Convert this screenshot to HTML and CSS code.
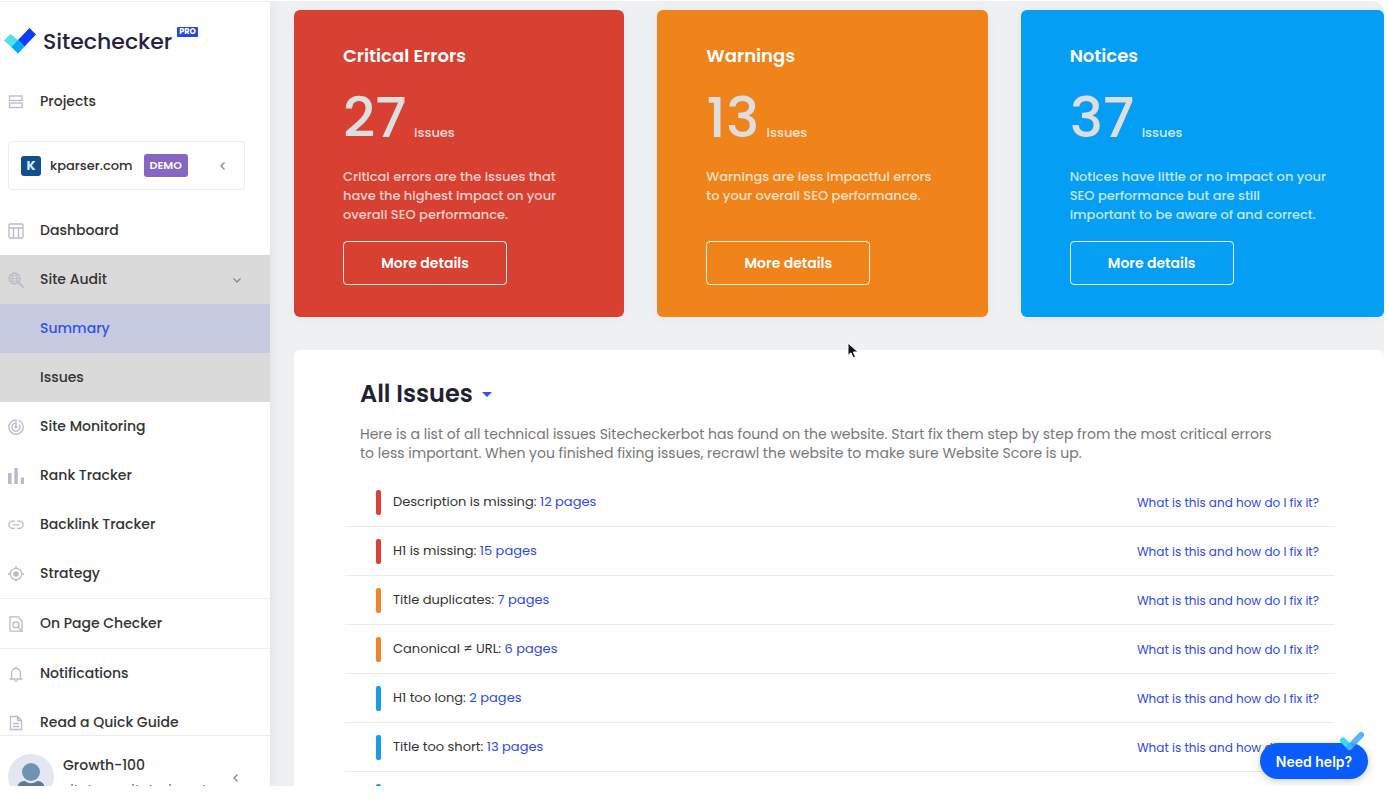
FILE: index.html
```html
<!DOCTYPE html>
<html lang="en">
<head>
  <meta charset="UTF-8">
  <meta name="viewport" content="width=device-width, initial-scale=1">
  <title>Sitechecker - Site Audit</title>
  <link rel="stylesheet" href="styles.css">
</head>
<body>
  <div class="app">
    <aside class="sidebar">
      <a class="logo" href="#">
        <svg class="logo-mark" width="32" height="26" viewBox="0 0 32 26" aria-hidden="true">
          <path d="M0 12.500 6.500 6 14 12 20.500 18.500 14 25.500Z" fill="#55dfe8"/>
          <path d="M25.500 0 32 6.500 20.500 18.500 14 12Z" fill="#0b3dfa"/>
          <path d="M14 12 20.500 18.500 14 25.500 7.500 19Z" fill="#04a9fb"/>
        </svg>
        <span class="logo-text">Sitechecker</span>
        <span class="pro">PRO</span>
      </a>

      <nav class="menu">
        <a class="item" href="#">
          <svg class="icon" viewBox="0 0 16 16"><rect x="1.500" y="2" width="12.500" height="4.500"/><rect x="1.500" y="9" width="12.500" height="4.500"/></svg>
          Projects
        </a>
        <button class="project" type="button">
          <span class="favicon">K</span>
          <span class="domain">kparser.com</span>
          <span class="demo">DEMO</span>
          <svg class="arrow" viewBox="0 0 12 12"><path d="M7.500 2.500 4 6l3.500 3.500"/></svg>
        </button>
        <a class="item" href="#">
          <svg class="icon" viewBox="0 0 16 16"><rect x="1" y="1" width="14" height="14" rx="1"/><path d="M1 5h14M5.500 5v10M10.500 5v10"/></svg>
          Dashboard
        </a>
        <a class="item open" href="#">
          <svg class="icon" viewBox="0 0 16 16"><circle cx="6.500" cy="6.500" r="5.500"/><ellipse cx="6.500" cy="6.500" rx="2.500" ry="5.500" stroke-width="1"/><path d="M1 6.500h11M2 3.800h9M2 9.200h9" stroke-width="1"/><path d="m10.500 10.500 5 5" stroke-width="2"/></svg>
          Site Audit
          <svg class="arrow" viewBox="0 0 12 12"><path d="M2.500 4.500 6 8l3.500-3.500"/></svg>
        </a>
        <a class="item sub active" href="#">Summary</a>
        <a class="item sub" href="#">Issues</a>
        <a class="item" href="#">
          <svg class="icon" viewBox="0 0 16 16"><path d="M8 8V.8a7.200 7.200 0 1 0 5.500 2.500M8 4.200a4 4 0 1 0 3 1.400"/><path d="M10.500 1.300a7.200 7.200 0 0 1 3 2"/><circle class="dot" cx="8" cy="8" r="1.500"/></svg>
          Site Monitoring
        </a>
        <a class="item" href="#">
          <svg class="icon solid" viewBox="0 0 16 16"><path d="M0 5h3.500v11H0zM6.300 0h3.500v16H6.300zM12.800 9.500H16V16h-3.200z"/></svg>
          Rank Tracker
        </a>
        <a class="item" href="#">
          <svg class="icon" viewBox="0 0 16 16"><path d="M7 4.200H4.500a3.600 3.600 0 0 0 0 7.200H7M9 4.200h2.500a3.600 3.600 0 0 1 0 7.200H9M5 7.800h6"/></svg>
          Backlink Tracker
        </a>
        <a class="item" href="#">
          <svg class="icon" viewBox="0 0 16 16"><circle cx="8" cy="8" r="5.700"/><circle class="dot" cx="8" cy="8" r="2.800"/><path d="M8 0v2.300M8 13.700V16M0 8h2.300M13.700 8H16"/></svg>
          Strategy
        </a>
        <a class="item line" href="#">
          <svg class="icon" viewBox="0 0 16 16"><path d="M2 .8h8L14 5v10.200H2z"/><circle cx="8" cy="8.800" r="3"/><path d="m10 11 3.800 4"/></svg>
          On Page Checker
        </a>
        <a class="item line" href="#">
          <svg class="icon" viewBox="0 0 16 16"><path d="M1.500 13h13M3.500 13V7a4.500 4.500 0 0 1 9 0v6M8 .5v2M6.700 14.500a1.400 1.400 0 0 0 2.600 0"/></svg>
          Notifications
        </a>
        <a class="item" href="#">
          <svg class="icon" viewBox="0 0 16 16"><path d="M2.500 1.500h7l4 4v9h-11zM9.500 1.500v4h4M5 8.500h6M5 11.500h6"/></svg>
          Read a Quick Guide
        </a>
      </nav>

      <div class="user">
        <svg class="avatar" width="46" height="46" viewBox="0 0 46 46" aria-hidden="true">
          <circle cx="23" cy="23" r="23" fill="#e3e7f2"/>
          <circle cx="23" cy="18" r="9" fill="#7094ad"/>
          <path d="M9 36c0-6 3-9 8-9 4 3 8 3 12 0 5 0 8 3 8 9z" fill="#5f7898"/>
        </svg>
        <div class="user-info">
          <span>Growth-100</span>
          <span class="email">sitetomysitetrains@t...</span>
        </div>
        <svg class="arrow" viewBox="0 0 12 12"><path d="M7.500 2.500 4 6l3.500 3.500"/></svg>
      </div>
    </aside>

    <main class="content">
      <div class="cards">
        <section class="card red">
          <h2>Critical Errors</h2>
          <p class="count"><strong>27</strong> issues</p>
          <p class="text">Critical errors are the issues that<br>have the highest impact on your<br>overall SEO performance.</p>
          <button type="button">More details</button>
        </section>
        <section class="card orange">
          <h2>Warnings</h2>
          <p class="count"><strong>13</strong> issues</p>
          <p class="text">Warnings are less impactful errors<br>to your overall SEO performance.</p>
          <button type="button">More details</button>
        </section>
        <section class="card blue">
          <h2>Notices</h2>
          <p class="count"><strong>37</strong> issues</p>
          <p class="text">Notices have little or no impact on your<br>SEO performance but are still<br>important to be aware of and correct.</p>
          <button type="button">More details</button>
        </section>
      </div>

      <section class="issues">
        <button class="filter" type="button">All Issues <span class="caret"></span></button>
        <p class="intro">Here is a list of all technical issues Sitecheckerbot has found on the website. Start fix them step by step from the most critical errors<br>to less important. When you finished fixing issues, recrawl the website to make sure Website Score is up.</p>
        <ul class="list">
          <li class="critical"><span>Description is missing: <a href="#">12 pages</a></span><a class="help" href="#">What is this and how do I fix it?</a></li>
          <li class="critical"><span>H1 is missing: <a href="#">15 pages</a></span><a class="help" href="#">What is this and how do I fix it?</a></li>
          <li class="warning"><span>Title duplicates: <a href="#">7 pages</a></span><a class="help" href="#">What is this and how do I fix it?</a></li>
          <li class="warning"><span>Canonical ≠ URL: <a href="#">6 pages</a></span><a class="help" href="#">What is this and how do I fix it?</a></li>
          <li class="notice"><span>H1 too long: <a href="#">2 pages</a></span><a class="help" href="#">What is this and how do I fix it?</a></li>
          <li class="notice"><span>Title too short: <a href="#">13 pages</a></span><a class="help" href="#">What is this and how do I fix it?</a></li>
          <li class="notice"></li>
        </ul>
      </section>
    </main>

    <button class="chat" type="button">
      Need help?
      <svg class="chat-mark" width="26" height="20" viewBox="0 0 26 20" aria-hidden="true">
        <path d="M4 9.500 10.500 16" stroke="#35dcf8"/>
        <path d="M10.500 16 22 4" stroke="#45acfb" stroke-opacity=".9"/>
      </svg>
    </button>
    <svg class="cursor" width="12" height="18" viewBox="0 0 12 18" aria-hidden="true">
      <path d="M1 1v12.500l3-2.700 2.200 5 2.300-1-2.200-4.800H11z" fill="#111" stroke="#fff"/>
    </svg>
  </div>
</body>
</html>
```
FILE: styles.css
```css
* {
  box-sizing: border-box;
}
body {
  margin: 0;
  padding: 1px 4px 13px 0;
  height: 100vh;
  background: #fff;
  font-family: Poppins, Inter, sans-serif;
  font-size: 14px;
  color: #333;
}
a {
  color: #2f49e8;
  text-decoration: none;
}
button {
  font-family: inherit;
  cursor: pointer;
}
h2, p, ul {
  margin: 0;
  padding: 0;
}
.app {
  position: relative;
  display: flex;
  height: 100%;
  overflow: hidden;
  background: #eef0f2;
  border-radius: 0 12px 0 0;
}

/* sidebar */
.sidebar {
  display: flex;
  flex-direction: column;
  flex: none;
  width: 270px;
  background: #fff;
  border-top: 1px solid #f0f0f2;
  box-shadow: 0 0 12px rgba(0, 0, 0, 0.08);
}
.logo {
  display: flex;
  flex: none;
  align-items: center;
  height: 75px;
  padding: 3px 0 0 4px;
  color: #25233f;
}
.logo-text {
  margin-left: 7px;
  font-size: 22px;
  font-weight: 500;
}
.pro {
  align-self: flex-start;
  margin: 22px 0 0 5px;
  padding: 0 2px;
  border-radius: 1px;
  background: #2546e5;
  color: #fff;
  font-size: 8px;
  font-weight: 700;
  line-height: 10px;
}
.menu {
  flex: 1;
  overflow: hidden;
}
.item {
  display: flex;
  align-items: center;
  height: 49px;
  padding: 0 27px 0 8px;
  color: #333;
  font-weight: 500;
}
.icon {
  flex: none;
  width: 16px;
  height: 16px;
  margin-right: 16px;
  fill: none;
  stroke: #b8bcc8;
  stroke-width: 1.3;
}
.icon .dot,
.icon.solid {
  fill: #b8bcc8;
  stroke: none;
}
.arrow {
  width: 12px;
  height: 12px;
  margin-left: auto;
  fill: none;
  stroke: #888;
  stroke-width: 1.3;
}
.open,
.sub {
  background: #dadada;
}
.sub {
  padding-left: 40px;
}
.active {
  background: #c4cae0;
  color: #3450ee;
}
.line {
  height: 50px;
  border-top: 1px solid #f0f0f2;
}
.project {
  display: flex;
  align-items: center;
  width: 237px;
  height: 49px;
  margin: 15px 8px 16px;
  padding: 0 15px 0 12px;
  border: 1px solid #ececf1;
  border-radius: 4px;
  background: #fff;
  color: #333;
  font-size: 13px;
  font-weight: 500;
}
.favicon {
  width: 20px;
  margin-right: 9px;
  border-radius: 3px;
  background: #114f8f;
  color: #dce9f6;
  font-weight: 700;
  line-height: 20px;
}
.demo {
  margin-left: 11px;
  padding: 0 6px;
  border-radius: 3px;
  background: #8665c3;
  color: #fff;
  font-size: 11px;
  font-weight: 600;
  line-height: 23px;
}
.user {
  display: flex;
  flex: none;
  height: 51px;
  padding: 18px 28px 0 8px;
  border-top: 1px solid #ececee;
  overflow: hidden;
  font-weight: 500;
}
.avatar {
  flex: none;
}
.user-info {
  display: flex;
  flex-direction: column;
  gap: 2px;
  margin-left: 9px;
  line-height: 23px;
}
.user .arrow {
  margin-top: 18px;
}
.email {
  color: #666;
  font-size: 14px;
  font-weight: 400;
}

/* cards */
.content {
  flex: 1;
  min-width: 0;
  padding: 9px 0 0 24px;
}
.cards {
  display: grid;
  grid-template-columns: 10fr 10fr 11fr;
  gap: 33px;
}
.card {
  display: flex;
  flex-direction: column;
  align-items: flex-start;
  height: 307px;
  padding: 31px 0 32px 49px;
  border-radius: 6px;
  box-shadow: 0 2px 12px rgba(0, 0, 0, 0.04);
  color: #fff;
}
.red {
  background: #d84132;
}
.orange {
  background: #f0831a;
}
.blue {
  background: #049ff5;
}
.card h2 {
  font-size: 18px;
  font-weight: 600;
  line-height: 30px;
}
.count {
  margin-top: 17px;
  color: rgba(255, 255, 255, 0.8);
  font-size: 13px;
  font-weight: 500;
  line-height: 60px;
}
.count strong {
  margin-right: 4px;
  color: #dedede;
  font-size: 56px;
  font-weight: 500;
}
.text {
  margin-top: 4px;
  color: rgba(255, 255, 255, 0.75);
  font-size: 13px;
  font-weight: 500;
  line-height: 19px;
  white-space: nowrap;
}
.card button {
  width: 164px;
  height: 44px;
  margin-top: auto;
  border: 1px solid rgba(255, 255, 255, 0.9);
  border-radius: 4px;
  background: none;
  color: #fff;
  font-size: 14px;
  font-weight: 600;
}

/* issues */
.issues {
  margin-top: 33px;
  padding: 26px 50px 0 51px;
  border-radius: 6px 6px 0 0;
  background: #fff;
}
.filter {
  display: flex;
  align-items: center;
  margin-left: 15px;
  padding: 0;
  border: 0;
  background: none;
  color: #1f2230;
  font-size: 24px;
  font-weight: 600;
  line-height: 36px;
}
.caret {
  margin-left: 9px;
  border: 5px solid transparent;
  border-top-color: #3450ee;
  border-bottom: 0;
}
.intro {
  margin: 13px 0 15px 15px;
  color: #777;
  font-size: 14px;
  line-height: 19px;
  white-space: nowrap;
}
.list {
  list-style: none;
}
.list li {
  display: flex;
  align-items: center;
  height: 49px;
  padding: 0 15px 0 31px;
  border-bottom: 1px solid #e9ebee;
  font-size: 13px;
}
.list li::before {
  content: "";
  width: 5px;
  height: 25px;
  margin-right: 12px;
  border-radius: 2px;
}
.critical::before {
  background: #d8423a;
}
.warning::before {
  background: #f0852a;
}
.notice::before {
  background: #169cea;
}
.list .help {
  margin-left: auto;
  padding-top: 2px;
  font-size: 12px;
}

/* chat button */
.chat {
  position: absolute;
  right: 16px;
  bottom: 7px;
  width: 108px;
  height: 36px;
  padding: 0;
  border: 0;
  border-radius: 18px;
  background: #0a5cff;
  box-shadow: 0 2px 8px rgba(0, 0, 0, 0.2);
  color: #fff;
  font-family: Inter, sans-serif;
  font-size: 14px;
  font-weight: 600;
}
.chat-mark {
  position: absolute;
  top: -12px;
  right: 3px;
  fill: none;
  stroke-width: 6;
  stroke-linecap: round;
}
.cursor {
  position: absolute;
  top: 341px;
  left: 847px;
}
```
